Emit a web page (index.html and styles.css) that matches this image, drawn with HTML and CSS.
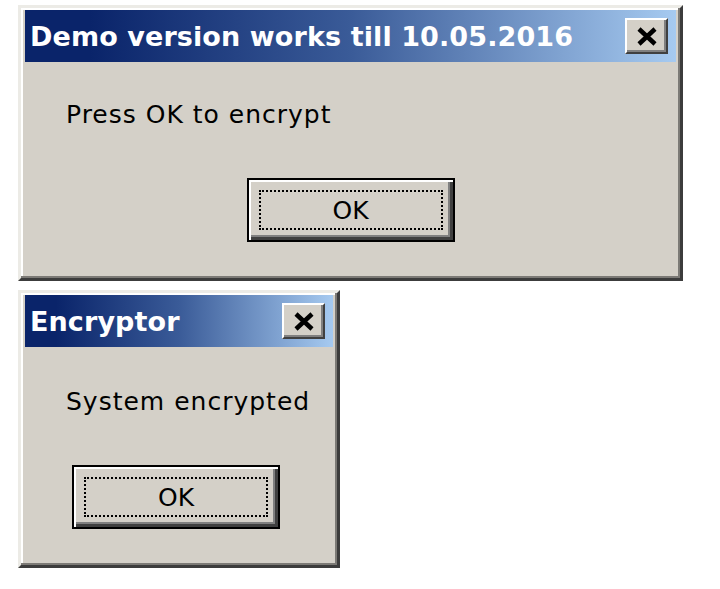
FILE: index.html
```html
<!DOCTYPE html>
<html lang="en">
<head>
  <meta charset="UTF-8" />
  <title>Encryptor</title>
  <link rel="stylesheet" href="styles.css">
</head>
<body>

<!-- Primeira janela -->
<div class="dialog dialog-demo">
  <div class="titlebar">
    <span class="title">Demo version works till 10.05.2016</span>
    <button class="close" aria-label="Close">
      <svg width="22" height="19" viewBox="0 0 22 19">
        <path d="M3 2 L19 17 M19 2 L3 17" stroke="#000" stroke-width="4.5" fill="none" />
      </svg>
    </button>
  </div>
  <div class="content">
    <p class="message">Press OK to encrypt</p>
    <div class="actions">
      <button class="ok"><span class="focus">OK</span></button>
    </div>
  </div>
</div>

<!-- Segunda janela -->
<div class="dialog dialog-done">
  <div class="titlebar">
    <span class="title">Encryptor</span>
    <button class="close" aria-label="Close">
      <svg width="22" height="19" viewBox="0 0 22 19">
        <path d="M3 2 L19 17 M19 2 L3 17" stroke="#000" stroke-width="4.5" fill="none" />
      </svg>
    </button>
  </div>
  <div class="content">
    <p class="message">System encrypted</p>
    <div class="actions">
      <button class="ok"><span class="focus">OK</span></button>
    </div>
  </div>
</div>

</body>
</html>
```

FILE: styles.css
```css
* {
  box-sizing: border-box;
}
body {
  margin: 0;
  padding: 5px 0 0 18px;
  background: #fff;
  font-family: "DejaVu Sans", Verdana, sans-serif;
  color: #000;
}
.dialog {
  background: #d4d0c8;
  border: 3px solid;
  border-color: #ecebe6 #3c3c3c #3c3c3c #ecebe6;
  box-shadow: inset -2px -2px 0 #7c7a76, inset 2px 2px 0 #fff;
  padding: 2px 4px;
  display: flex;
  flex-direction: column;
}
.dialog-demo {
  width: 665px;
  height: 276px;
}
.dialog-done {
  width: 322px;
  height: 278px;
  margin-top: 9px;
}
.titlebar {
  height: 52px;
  display: flex;
  align-items: center;
  justify-content: space-between;
  padding: 0 8px 0 5px;
  background: linear-gradient(to right, #0a246a 10%, #3a5b98 50%, #a6caf0);
}
.title {
  color: #fff;
  font-weight: bold;
  font-size: 27px;
  letter-spacing: 0.1px;
}
.close {
  width: 43px;
  height: 36px;
  padding: 0;
  background: #d4d0c8;
  border: 2px solid;
  border-color: #fff #404040 #404040 #fff;
  box-shadow: inset -2px -2px 0 #808080;
  display: flex;
  align-items: center;
  justify-content: center;
}
.content {
  flex: 1;
  display: flex;
  flex-direction: column;
}
.message {
  margin: 38px 0 0 41px;
  font-size: 25px;
  letter-spacing: 1px;
  line-height: 30px;
}
.dialog-done .message {
  margin-top: 40px;
}
.actions {
  display: flex;
  justify-content: center;
  margin-top: 48px;
}
.dialog-done .actions {
  padding-right: 6px;
}
.ok {
  width: 208px;
  height: 64px;
  padding: 10px;
  background: #d4d0c8;
  border: 2px solid #000;
  box-shadow: inset 2px 2px 0 #fff, inset -3px -3px 0 #404040, inset -5px -5px 0 #808080;
  font-family: "DejaVu Sans", Verdana, sans-serif;
  font-size: 25px;
  color: #000;
}
.focus {
  display: flex;
  align-items: center;
  justify-content: center;
  height: 100%;
  border: 2px dotted #000;
}
```
